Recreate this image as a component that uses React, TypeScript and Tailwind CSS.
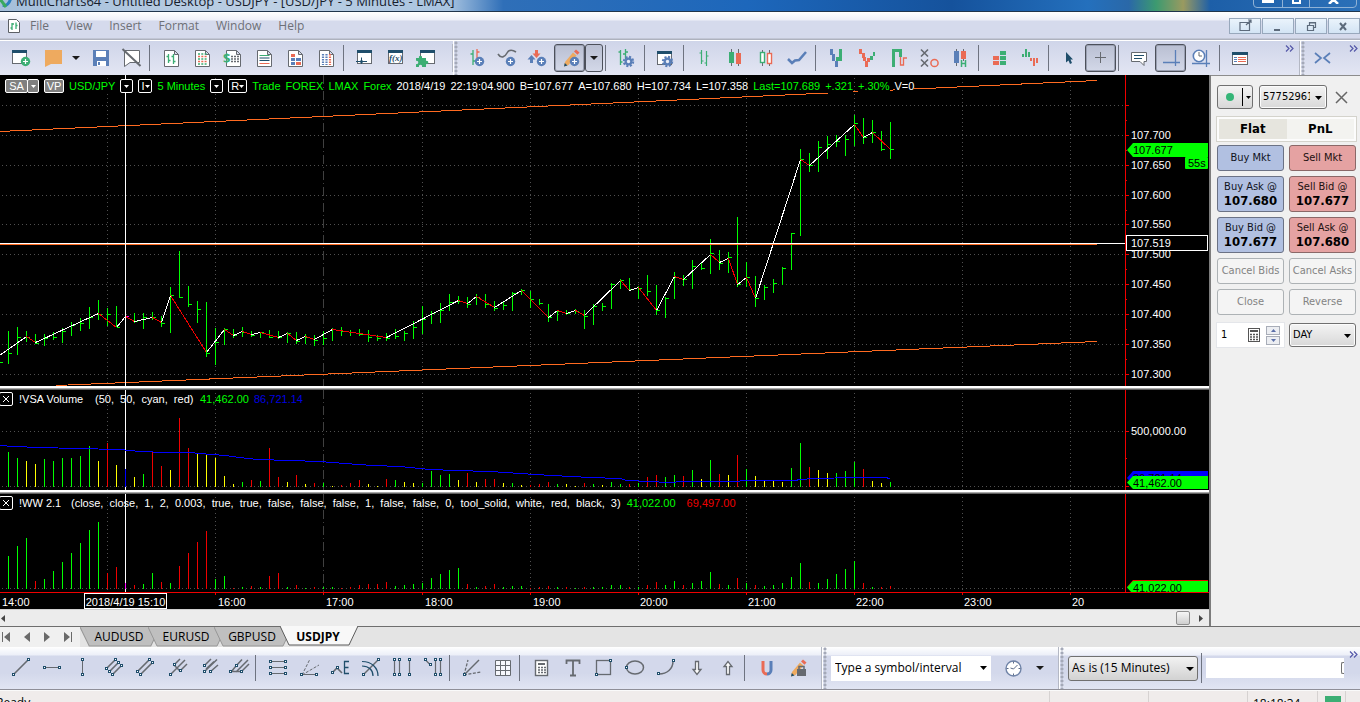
import React from "react";

const GRAY = "#666a70";
const BLUE = "#5a7fb8";
const GREEN = "#3cae74";
const RED = "#ea6b55";
const TEAL = "#1f4e6b";
const ORANGE = "#eeaa5f";

/* ---------- market data ---------- */

const BAR_STEP = 9;
const FIRST_BAR = 8;
const CURSOR_BAR = 13;
const PLOT_WIDTH = 1125;

// high, low, close in plot units
const priceBars = `256,289,278 252,280,262 256,267,262 259,269,268 259,271,263 257,265,262 253,268,256 247,261,250 243,256,248 232,254,242
225,245,239 233,251,239 231,252,252 235,261,241 238,248,246 238,254,242 237,245,242 241,252,248 212,258,220 176,223,222
211,232,229 226,248,234 227,282,278 253,290,267 253,270,254 254,263,260 252,262,257 256,262,260 257,263,257 255,263,262
256,264,262 257,268,258 257,269,266 259,269,262 260,271,265 256,270,263 253,266,254 252,261,256 255,261,257 254,261,259
255,267,262 260,266,263 258,266,263 254,264,261 256,266,258 246,264,252 231,259,244 236,249,238 228,248,235 219,236,227
221,229,226 222,233,229 219,230,222 219,233,229 226,236,233 226,235,230 217,236,218 214,220,215 216,233,224 224,230,228
229,247,242 235,246,236 235,240,238 234,239,236 235,254,241 229,250,231 228,236,231 208,234,209 204,214,205 203,216,214
211,224,213 200,221,216 210,240,235 222,243,223 197,224,202 200,211,204 185,214,191 188,195,193 164,199,178 175,195,188
177,198,182 142,212,209 187,212,202 201,232,223 210,225,212 204,218,208 192,210,193 158,195,158 74,161,84 78,97,90
66,97,72 61,84,69 60,72,66 60,81,64 40,71,48 43,69,62 45,68,57 56,76,74 47,84,74`
  .split(/\s+/)
  .map((bar) => bar.split(",").map(Number));

const swings: [number, number][] = [
  [-1, 280], [26, 261], [35, 267], [98, 238], [116, 252], [125, 241], [134, 246], [152, 242], [161, 247], [170, 220],
  [206, 277], [224, 254], [233, 260], [242, 256], [251, 259], [260, 257], [278, 262], [287, 258], [296, 265], [305, 261],
  [314, 264], [332, 254], [386, 262], [458, 225], [467, 228], [476, 221], [494, 232], [521, 215], [548, 242], [557, 235],
  [566, 238], [575, 235], [584, 240], [620, 205], [629, 215], [638, 212], [656, 235], [674, 201], [683, 204], [710, 179],
  [719, 187], [728, 183], [737, 209], [746, 202], [755, 223], [800, 84], [809, 90], [854, 49], [863, 62], [872, 57], [890, 74],
];

const volumeBars = `g35 g29 y26 y23 g28 g26 g29 g29 g31 g41 y26 r44 y22 b18 y10 g13 r35 r21 y17 r69 r39 y34 y33 y29 y11 y3 g5 r7 g6 r39
r10 y5 r12 y3 r4 g4 y1 r2 r4 r7 y3 y1 r8 g7 y5 y4 g4 g16 g12 g13 y7 r14 y5 r8 r8 y4 g4 y2 r2 r3 r5 g3 y3 y1 r4 g3 y2 g5 g3 r3
g4 r10 r12 g10 g12 r11 g17 y8 g27 r13 y12 r32 g18 y11 y7 y6 y5 g19 g44 r20 y17 y14 g14 g16 g25 r18 y6 y4 g5`.split(/\s+/);

const waveBars = `g33 g43 g51 r8 g10 g18 g27 g36 g46 g59 g67 r16 r22 m6 r4 g5 g16 r7 g6 r23 r36 r47 r58 g10 g13 r1 g2 r3 g2 r13
r16 g2 r4 g1 r2 g2 g2 r1 r2 r4 r5 r5 r7 g3 g4 g5 g6 g11 g15 g19 g21 r5 g2 r3 r5 g2 g3 g3 r1 r2 r3 g2 r2 g1 r2 g2 g2 g4
g4 r2 g2 r4 r7 g4 g8 r4 g6 g8 g17 r5 g4 r11 g6 r4 g3 g4 g6 g12 g26 r7 g6 g10 g15 g20 g28 r6 g2 r2 r3`.split(/\s+/);

const volumeAverage =
  "0,55 13,56 40,57 76,58 120,59 140,61 165,62 190,62 200,63 225,65 240,67 257,69 290,70 320,71 345,73 373,75 400,76 430,79 455,80 490,81 520,83 552,85 590,87 620,88 627,90 650,91 668,92 685,91 735,91 745,90 795,90 800,89 815,88 855,87 885,87 890,88";

const barColors: Record<string, string> = { g: "#00ff00", r: "#f00000", y: "#ffff00", b: "#0000ff", m: "#ff00ff" };

const hourLines = [107, 215, 422, 530, 638, 746, 854, 962, 1070];

const timeLabels = [
  { x: 2, text: "14:00" }, { x: 218, text: "16:00" }, { x: 326, text: "17:00" }, { x: 425, text: "18:00" }, { x: 533, text: "19:00" },
  { x: 640, text: "20:00" }, { x: 748, text: "21:00" }, { x: 856, text: "22:00" }, { x: 964, text: "23:00" }, { x: 1072, text: "20" },
];

const priceLabels = [
  { y: 60, text: "107.700" }, { y: 90, text: "107.650" }, { y: 120, text: "107.600" }, { y: 149, text: "107.550" }, { y: 179, text: "107.500" },
  { y: 209, text: "107.450" }, { y: 239, text: "107.400" }, { y: 269, text: "107.350" }, { y: 299, text: "107.300" },
];

/* ---------- chart pieces ---------- */

function Grid({ height, rows }: { height: number; rows: number[] }) {
  return (
    <g stroke="#505050" fill="none">
      {rows.map((y) => (
        <path key={y} d={`M2 ${y}.5H1125`} strokeDasharray="1 3" />
      ))}
      {hourLines.map((x) => (
        <path key={x} d={`M${x}.5 3V${height}`} strokeDasharray="1 3" />
      ))}
      <path d={`M323.5 0V${height}`} stroke="#404040" strokeDasharray="9 3 1 3" />
    </g>
  );
}

function Plot({ height, className, children }: { height: number; className: string; children: React.ReactNode }) {
  return (
    <svg className={`block min-w-0 flex-1 ${className}`} viewBox={`0 0 ${PLOT_WIDTH} ${height}`} preserveAspectRatio="none" shapeRendering="crispEdges">
      {children}
    </svg>
  );
}

function Histogram({ bars, base }: { bars: string[]; base: number }) {
  return (
    <>
      {bars.map((bar, i) => {
        const h = Number(bar.slice(1));
        return <rect key={i} x={FIRST_BAR + i * BAR_STEP} y={base - h} width="1" height={h} fill={barColors[bar[0]]} />;
      })}
    </>
  );
}

function Splitter() {
  return <div className="h-1 shrink-0 border-b border-[#606060] bg-gradient-to-b from-white from-60% to-[#a8a8a8] to-80%" />;
}

function HeaderBox({ children, gray, className = "" }: { children?: React.ReactNode; gray?: boolean; className?: string }) {
  return (
    <button className={`flex h-[14px] items-center justify-center rounded-[2px] border border-white ${gray ? "bg-[#808080]" : "bg-black"} ${className}`}>
      {children}
    </button>
  );
}

function Caret({ className = "text-white", size = 5 }: { className?: string; size?: number }) {
  return (
    <svg className={className} width={size} height={size === 5 ? 3 : 4} viewBox="0 0 8 4" preserveAspectRatio="none">
      <path d="M0 0H8L4 4z" fill="currentColor" />
    </svg>
  );
}

function PaneHeader({ children }: { children: React.ReactNode }) {
  return (
    <div className="absolute top-[2px] left-0 flex items-center whitespace-pre text-[11px] leading-[14px] text-white">
      <button aria-label="Close study" className="-ml-px flex size-[14px] items-center justify-center rounded-[2px] border border-white bg-black">
        <svg width="8" height="8" viewBox="0 0 8 8" stroke="#fff"><path d="M1 1L7 7M7 1L1 7" /></svg>
      </button>
      {children}
    </div>
  );
}

function PriceTag({ y, color, label, height = 14 }: { y: number; color: string; label: string; height?: number }) {
  return (
    <g>
      <path d={`M2 ${y + height / 2}L8 ${y}H83V${y + height}H8z`} fill={color} />
      <text x="8" y={y + 11} fill="#000">{label}</text>
    </g>
  );
}

function PricePane() {
  const rows = [30, 60, 90, 120, 149, 179, 209, 239, 269, 299];
  return (
    <div className="relative flex h-[311px] shrink-0">
      <Plot height={311} className="h-[311px]">
        <Grid height={311} rows={rows} />
        <path d="M0 56.5L1097 5.5M56 310.5L1097 266.5" stroke="#ff6a20" fill="none" />
        {priceBars.map(([high, low, close], i) => {
          const x = FIRST_BAR + i * BAR_STEP;
          return (
            <path key={i} d={`M${x} ${high}h1V${close}h3v1h-3V${low}h-1z`} fill={i === CURSOR_BAR ? "#ff00ff" : "#00ff00"} />
          );
        })}
        <rect x="0" y="287" width="3" height="1" fill="#00ff00" />
        {swings.slice(1).map(([x, y], i) => (
          <path key={i} d={`M${swings[i][0] + 0.5} ${swings[i][1] + 0.5}L${x + 0.5} ${y + 0.5}`} stroke={i % 2 === 0 ? "#fff" : "#f00000"} />
        ))}
        <rect x="0" y="168" width="1125" height="1" fill="#fff" />
        <rect x="0" y="169" width="1097" height="1" fill="#ff6a20" />
        <rect x="125" y="0" width="1" height="311" fill="#fff" />
      </Plot>
      <svg className="block w-[84px] shrink-0" height="311" fontSize="11">
        <g fill="#f00000" shapeRendering="crispEdges">
          <rect x="0" y="0" width="1" height="311" />
          {rows.map((y) => <rect key={y} x="1" y={y} width="3" height="1" />)}
          {rows.map((y) => <rect key={y} x="1" y={y + 15} width="1" height="1" />)}
        </g>
        {priceLabels.map((p) => <text key={p.text} x="6" y={p.y + 4} fill="#fff">{p.text}</text>)}
        <PriceTag y={68} color="#00ff00" label="107.677" />
        <rect x="60" y="82" width="23" height="12" rx="1" fill="#00ff00" />
        <text x="63" y="92" fill="#000">55s</text>
        <rect x="1.5" y="160.5" width="81" height="15" fill="#000" stroke="#fff" />
        <text x="6" y="172" fill="#fff">107.519</text>
      </svg>
      <div className="absolute top-[4px] left-[5px] flex items-center gap-[5px] whitespace-nowrap text-[11px] leading-[14px] text-[#00ff00]">
        <span className="flex text-white">
          <HeaderBox gray className="w-[23px]">SA</HeaderBox>
          <HeaderBox gray className="-ml-px w-[12px]"><Caret /></HeaderBox>
        </span>
        <HeaderBox gray className="w-5 text-white">VP</HeaderBox>
        <span className="bg-black">USD/JPY</span>
        <HeaderBox className="w-[13px]"><Caret /></HeaderBox>
        <HeaderBox className="w-[14px] text-white">I<Caret /></HeaderBox>
        <span className="bg-black">5 Minutes</span>
        <HeaderBox className="w-[13px]"><Caret /></HeaderBox>
        <HeaderBox className="w-[19px] text-white">R<Caret /></HeaderBox>
        <span className="bg-black">Trade</span>
        <span className="bg-black">FOREX</span>
        <span className="bg-black">LMAX</span>
        <span className="bg-black">Forex</span>
        <span className="bg-black text-white">2018/4/19</span>
        <span className="bg-black text-white">22:19:04.900</span>
        <span className="bg-black text-white">B=107.677</span>
        <span className="bg-black text-white">A=107.680</span>
        <span className="bg-black text-white">H=107.734</span>
        <span className="bg-black text-white">L=107.358</span>
        <span className="bg-black">Last=107.689</span>
        <span className="bg-black">+.321</span>
        <span className="bg-black">+.30%</span>
        <span className="bg-black text-white">V=0</span>
      </div>
    </div>
  );
}

function VolumePane() {
  return (
    <div className="relative flex h-[100px] shrink-0">
      <Plot height={100} className="h-[100px]">
        <Grid height={100} rows={[41, 96]} />
        <rect x="125" y="0" width="1" height="100" fill="#fff" />
        <Histogram bars={volumeBars} base={97} />
        <polyline points={volumeAverage} stroke="#0000ff" fill="none" transform="translate(0 .5)" />
      </Plot>
      <svg className="block w-[84px] shrink-0" height="100" fontSize="11">
        <path d="M.5 0V100M1 41.5H4M1 68.5H2M1 96.5H4" stroke="#f00000" shapeRendering="crispEdges" />
        <text x="6" y="45" fill="#fff">500,000.00</text>
        <PriceTag y={81} color="#0000ff" label="86,721.14" />
        <PriceTag y={86} color="#00ff00" label="41,462.00" height={13} />
      </svg>
      <PaneHeader>
        <span className="ml-[6px] w-[76px] bg-black">!VSA Volume</span>
        <span className="w-[105px]">(50,  50,  cyan,  red)</span>
        <span className="w-[54px] text-[#00ff00]">41,462.00</span>
        <span className="text-[#0000e0]">86,721.14</span>
      </PaneHeader>
    </div>
  );
}

function WavePane() {
  return (
    <div className="relative flex h-[98px] shrink-0">
      <Plot height={98} className="h-[98px]">
        <Grid height={98} rows={[94]} />
        <rect x="125" y="0" width="1" height="98" fill="#fff" />
        <Histogram bars={waveBars} base={95} />
      </Plot>
      <svg className="block w-[84px] shrink-0" height="98" fontSize="11">
        <path d="M.5 0V98" stroke="#f00000" shapeRendering="crispEdges" />
        <PriceTag y={86} color="#f00000" label="" />
        <PriceTag y={87} color="#00ff00" label="41,022.00" height={13} />
      </svg>
      <PaneHeader>
        <span className="ml-[6px] w-[52px] bg-black">!WW 2.1</span>
        <span className="mr-[6px]">(close,  close,  1,  2,  0.003,  true,  true,  false,  false,  false,  1,  false,  false,  0,  tool_solid,  white,  red,  black,  3)</span>
        <span className="mr-[11px] text-[#00ff00]">41,022.00</span>
        <span className="text-[#f00000]">69,497.00</span>
      </PaneHeader>
    </div>
  );
}

function TimeAxis() {
  return (
    <div className="flex h-[17px] shrink-0 border-t border-[#f00000] bg-black">
      <div className="relative min-w-0 flex-1 text-[11px] leading-[18px] text-white">
        {timeLabels.map((t) => (
          <span key={t.x} className="absolute top-0" style={{ left: `${(t.x / PLOT_WIDTH) * 100}%` }}>{t.text}</span>
        ))}
        {[215, 323, 422, 530, 638, 746, 854, 962, 1070].map((x) => (
          <i key={x} className="absolute top-0 h-[2px] w-px bg-[#f00000]" style={{ left: `${(x / PLOT_WIDTH) * 100}%` }} />
        ))}
        <span className="absolute top-0 left-[84px] h-4 w-[83px] border border-white bg-black text-center leading-4 whitespace-nowrap">2018/4/19 15:10</span>
      </div>
      <div className="w-[84px] shrink-0" />
    </div>
  );
}

/* ---------- toolbar icons ---------- */

function Tool({ label, children, pressed }: { label: string; children: React.ReactNode; pressed?: boolean }) {
  return (
    <button
      aria-label={label}
      className={`flex h-[28px] w-[31px] shrink-0 items-center justify-center overflow-hidden ${pressed ? "rounded-[3px] border border-[#4c505a] bg-gradient-to-b from-[#b9bfd2] to-[#d3d8e8] shadow-[inset_0_0_0_1px_#9aa0b2]" : ""}`}
    >
      <svg className="block shrink-0" width="31" height="34" viewBox="0 0 31 34" fill="none">{children}</svg>
    </button>
  );
}

function Sep() {
  return <i className="flex h-[26px] w-2 shrink-0 pl-[2px]"><i className="w-px bg-[#6e7380]" /></i>;
}

function Grip() {
  return <i className="h-full w-[5px] shrink-0 border-l border-white bg-[radial-gradient(circle,#a4a9b8_1px,transparent_2px)] bg-[length:4px_4px]" />;
}

function DropCaret({ label }: { label: string }) {
  return (
    <button aria-label={label} className="flex h-[28px] w-[18px] shrink-0 items-center justify-center">
      <Caret className="text-[#1a1a1a]" size={8} />
    </button>
  );
}

function Chevrons({ className = "" }: { className?: string }) {
  return (
    <button aria-label="More tools" className={`flex w-3 shrink-0 justify-center ${className}`}>
      <svg width="9" height="7" viewBox="0 0 9 7" fill="none" stroke="#5458a8" strokeWidth="1.2"><path d="M1 .5L4 3.5L1 6.5M5 .5L8 3.5L5 6.5" /></svg>
    </button>
  );
}

const Doc = () => <path d="M9.5 9.5H19.5L23.5 13.5V25.5H9.5zM19.5 9.5V13.5H23.5" fill="#fff" stroke={GRAY} />;
const Win = ({ x = 7, y = 9 }: { x?: number; y?: number }) => (
  <>
    <rect x={x + 0.5} y={y + 0.5} width="14" height="13" fill="#fff" stroke={GRAY} />
    <rect x={x} y={y} width="15" height="3" fill={TEAL} />
  </>
);
const Plus = ({ x = 18.5, y = 20.5, color = BLUE }: { x?: number; y?: number; color?: string }) => (
  <>
    <circle cx={x} cy={y} r="4.7" fill={color} />
    <path d={`M${x - 2.5} ${y}h5M${x} ${y - 2.5}v5`} stroke="#fff" strokeWidth="1.2" />
  </>
);
const Gear = ({ x = 17.5, y = 20.5 }: { x?: number; y?: number }) => (
  <>
    <circle cx={x} cy={y} r="4.5" stroke={BLUE} strokeWidth="2.4" strokeDasharray="2 1.53" />
    <circle cx={x} cy={y} r="2.8" stroke={BLUE} strokeWidth="2.2" fill="#e8ecf6" />
  </>
);
const Nodes = ({ at }: { at: [number, number][] }) => (
  <>
    {at.map(([x, y]) => (
      <rect key={`${x}-${y}`} x={x - 1.5} y={y - 1.5} width="2" height="2" fill="#fff" stroke={TEAL} />
    ))}
  </>
);
const Pencil = () => (
  <>
    <path d="M11 21L19 11.5L22.5 14.5L14.5 24L10 25.5z" fill={ORANGE} />
    <path d="M10 25.5L10.8 22L13.5 24.4z" fill={TEAL} />
    <path d="M20 10.5L22 8.5L25.5 11.5L23.5 13.7z" fill={RED} />
  </>
);

function TopTools() {
  return (
    <div className="flex h-[34px] shrink-0 items-center overflow-hidden bg-gradient-to-b from-[#cfd5e9] to-[#e3e6f3]">
      <div className="flex w-[453px] shrink-0 items-center border-r border-[#b4b8c4] pl-[5px]">
        <Tool label="New window"><Win /><Plus x={20.5} color={GREEN} /></Tool>
        <Tool label="Open"><path d="M9 9H26V23H15L9 26z" fill={ORANGE} /></Tool>
        <DropCaret label="Open options" />
        <Tool label="Save">
          <rect x="8" y="9" width="16" height="16" fill={BLUE} /><rect x="11" y="10" width="10" height="6" fill="#fff" /><rect x="12" y="20" width="9" height="5" fill="#fff" /><rect x="13" y="21" width="2" height="3" fill={BLUE} />
        </Tool>
        <Tool label="Hide drawings"><path d="M8.5 9.5H23.5V21.5H14L8.5 25.5z" fill="#fff" stroke={GRAY} /><path d="M6.5 8L24.5 25" stroke={GRAY} strokeWidth="2" /></Tool>
        <Sep />
        <Tool label="Chart window"><Doc /><path d="M13.5 13V22M13.5 15.5h-2M18.5 13V23M18.5 20.5h2M13.5 19.5h2M16.5 15.5h2" stroke={GREEN} strokeWidth="1.3" /></Tool>
        <Tool label="Scanner"><Doc />{[13, 15.5, 18, 20.5, 23].map((y, i) => <path key={y} d={`M12 ${y}H21`} stroke={i % 2 ? RED : GREEN} strokeWidth="1.4" strokeDasharray="2 1.3" />)}</Tool>
        <Tool label="Portfolio"><Doc /><path d="M14 15.5H22M14 18H22M14 20.5H22" stroke={GRAY} strokeDasharray="2 1" strokeWidth="1.3" /><text x="6" y="22" fontSize="13" fontWeight="bold" fill={GREEN}>$</text></Tool>
        <Tool label="Order tracker"><Doc /><path d="M11.5 14.5H21.5" stroke={GREEN} /><path d="M11.5 17H21.5M11.5 19.5H21.5" stroke={TEAL} /><path d="M11.5 22.5H21.5" stroke={RED} /></Tool>
        <Tool label="Market depth"><Doc /><rect x="12" y="13" width="4" height="3" fill={RED} /><path d="M12 17h4v3h-4zM12 21h4v3h-4zM17 17h5v3h-5z" fill={BLUE} /><rect x="17" y="21" width="5" height="3" fill={RED} /></Tool>
        <Tool label="Time and sales"><Doc /><path d="M13 13V24M16.5 13V24" stroke={BLUE} strokeWidth="2.2" strokeDasharray="1.5 1" /><path d="M20 13V24" stroke={RED} strokeWidth="2.2" strokeDasharray="1.5 1" /></Tool>
        <Sep />
        <Tool label="Trading panel"><Win x={8} /><path d="M7 20.5H18M12.5 16.5V23" stroke={TEAL} /><circle cx="12.5" cy="20.5" r="1.5" fill={TEAL} /></Tool>
        <Tool label="Formula editor"><Win x={8} /><text x="9" y="20" fontSize="9" fontStyle="italic" fontWeight="bold" fill={TEAL} fontFamily="Liberation Serif, serif">f(x)</text></Tool>
        <Tool label="Add-ons"><Win x={9} /><path d="M5 17h3c-1-3 4-3 3 0h4v3c3-1 3 4 0 3v3h-4c1-3-4-3-3 0H5v-3c3 1 3-4 0-3z" fill={GREEN} /></Tool>
      </div>
      <Grip />
      <div className="flex min-w-0 flex-1 items-center pl-[3px]">
        <Tool label="Insert symbol"><path d="M12 9V24M9.5 13h2.5M12 20h2.5" stroke={GREEN} strokeWidth="1.3" /><path d="M16 8V17M16 11h2.5" stroke={RED} strokeWidth="1.3" /><Plus /></Tool>
        <Tool label="Insert study"><path d="M6 13C9 18 13 16 15 12C17 8 21 9 24 11" stroke={GRAY} strokeWidth="1.6" /><Plus /></Tool>
        <Tool label="Insert signal"><path d="M12 9h3v3.5h2.5L13.5 17L9.5 12.5H12z" fill={RED} /><path d="M8.5 14L12.5 18.5H10V22H7V18.5H4.5z" fill={BLUE} /><Plus /></Tool>
        <Tool label="Insert drawing" pressed><Pencil /><Plus x={20.5} /></Tool>
        <button aria-label="Drawing options" className="flex h-[28px] w-[18px] shrink-0 items-center justify-center rounded-[3px] border border-[#4c505a] bg-gradient-to-b from-[#b9bfd2] to-[#d3d8e8]"><Caret className="text-[#1a1a1a]" size={8} /></button>
        <Sep />
        <Tool label="Format symbol"><path d="M9.5 9V24M7.5 11h2M9.5 21h2M14.5 8V18M12 13h2.5M14.5 11h2.5" stroke={GREEN} strokeWidth="1.3" /><Gear /></Tool>
        <Sep />
        <Tool label="Format window"><Win x={7} y={10} /><Gear /></Tool>
        <Sep />
        <Tool label="Bar chart"><path d="M12.5 9V23M10.5 12h2M12.5 20h2M17.5 10V25M15.5 22h2M17.5 15h2" stroke={GREEN} strokeWidth="1.2" /></Tool>
        <Tool label="Candlestick"><path d="M11.5 8V25M18.5 8V25" stroke={GRAY} /><rect x="9" y="11" width="5" height="11" fill={GREEN} /><rect x="16" y="12" width="5" height="11" fill={RED} /></Tool>
        <Tool label="Hollow candlestick"><path d="M11.5 9V25M18.5 9V25" stroke={GRAY} /><rect x="9.5" y="11.5" width="4" height="10" fill="#fff" stroke={GREEN} strokeWidth="1.4" /><rect x="16.5" y="12.5" width="4" height="10" fill="#fff" stroke={RED} strokeWidth="1.4" /></Tool>
        <Tool label="Line on close"><path d="M6 18L10 22L13 19.5L17 19L24 11" stroke={BLUE} strokeWidth="2.5" /></Tool>
        <Sep />
        <Tool label="Renko"><path d="M9 8h3v6H9zM11 13h3v7h-3zM14 20h3v6h-3z" fill={BLUE} /><path d="M18 8h3v12h-3zM15 16h3v4h-3z" fill={GREEN} /></Tool>
        <Tool label="Kagi"><path d="M7 8h3v5H7zM10 12h3v5h-3zM13 20h3v6h-3zM11 16h3v4h-3zM15 17h3v4h-3z" fill={RED} /><path d="M18 15h3v-4h2v4h-2v4h-3z" fill={GREEN} /></Tool>
        <Tool label="Line break"><path d="M10.5 26V9.5H17.5V16" stroke={GREEN} strokeWidth="3" /><path d="M17.5 16V24H20.5V17H24" stroke={RED} strokeWidth="1.3" /></Tool>
        <Tool label="Point and figure"><path d="M7 8.5L14 15.5M14 8.5L7 15.5M7 18.5L14 25.5M14 18.5L7 25.5" stroke={GRAY} strokeWidth="1.6" /><circle cx="20.5" cy="22" r="3.6" stroke={RED} strokeWidth="1.5" /></Tool>
        <Tool label="Heikin Ashi"><path d="M11.5 8V25M18.5 8V20" stroke={GRAY} /><rect x="9" y="10" width="5" height="12" fill={BLUE} /><rect x="16" y="10" width="5" height="8" fill={RED} /><path d="M16.5 19V26M20.5 19V26M16.5 22.5H20.5" stroke={GREEN} strokeWidth="1.5" /></Tool>
        <Sep />
        <Tool label="Volume profile"><path d="M16 10h6v4h-6zM16 15h6v4h-6zM16 20h6v4h-6z" fill={GREEN} /><path d="M9 15h6v4H9zM9 20h6v4H9z" fill={RED} /></Tool>
        <Tool label="Volume delta"><path d="M7 13h2v3H7zM10 8h2v8h-2zM13 11h2v5h-2z" fill={GREEN} /><path d="M15 17h2v3h-2zM18 17h2v8h-2zM21 17h2v5h-2z" fill={RED} /></Tool>
        <Sep />
        <Tool label="Pointer"><path d="M12 11V21.5L14.5 19.5L16 23L18 22L16.5 18.5H19z" fill={TEAL} /></Tool>
        <Tool label="Cross pointer" pressed><path d="M10 16.5H21M15.5 11V22" stroke={GRAY} /></Tool>
        <Sep />
        <Tool label="Data tip"><path d="M7.5 11.5H22.5V20.5H20V24.5L16 20.5H7.5z" fill="#fff" stroke={GRAY} /><path d="M10 14.5H20M10 17.5H18" stroke={TEAL} /></Tool>
        <Tool label="Track cursor" pressed><path d="M8 21.5H25M20.5 9V25" stroke={BLUE} strokeWidth="1.3" /></Tool>
        <Tool label="Time tracking"><circle cx="13" cy="15" r="5.7" fill="#fff" stroke={BLUE} strokeWidth="1.6" /><path d="M13 11V15H16" stroke={GRAY} /><path d="M6 22.5H24M20.5 9V26" stroke={BLUE} strokeWidth="1.3" /></Tool>
        <Sep />
        <Tool label="Quote list"><rect x="7.5" y="11.5" width="15" height="12" fill="#fff" stroke={GRAY} /><rect x="7" y="11" width="16" height="3" fill={TEAL} /><path d="M9 16.5h3M9 18.5h3M9 20.5h3" stroke={BLUE} /><path d="M13 16.5h8M13 18.5h8M13 20.5h8" stroke={RED} /></Tool>
        <Chevrons className="mb-5 ml-auto" />
        <i className="ml-[4px] h-[34px] w-px bg-[#b4b8c4]" />
      </div>
      <Grip />
      <Tool label="Compress bars"><path d="M10 12L16 17L10 22M25 12L19 17L25 22" stroke={BLUE} strokeWidth="1.7" /></Tool>
      <Chevrons className="mr-px mb-5 ml-[11px]" />
    </div>
  );
}

function DrawingTools() {
  return (
    <div className="flex min-w-0 flex-1 items-center pl-[5px]">
      <Tool label="Trend line"><path d="M8 24L22.5 9.5" stroke={GRAY} strokeWidth="1.6" /><Nodes at={[[9, 24], [24, 9]]} /></Tool>
      <Tool label="Horizontal line"><path d="M9 16.5H23" stroke={GRAY} /><Nodes at={[[9, 17], [24, 17]]} /></Tool>
      <Tool label="Vertical line"><path d="M15.5 10V24" stroke={GRAY} /><Nodes at={[[16, 9], [16, 24]]} /></Tool>
      <Tool label="Equidistant channel"><path d="M8 18L17 9M11 21L20 12M14 24L23 15" stroke={GRAY} strokeWidth="1.6" /><Nodes at={[[18, 9], [24, 15], [9, 18], [15, 24], [12, 21], [21, 12]]} /></Tool>
      <Tool label="Regression channel"><path d="M8 21L20 9M11 24L23 12" stroke={GRAY} strokeWidth="1.6" /><Nodes at={[[21, 9], [24, 12], [9, 21], [12, 24]]} /></Tool>
      <Tool label="Pitchfork"><path d="M10 24L25 9M14 14L20 8M20 20L27 13M14 14L20 20" stroke={GRAY} strokeWidth="1.5" /><Nodes at={[[11, 24], [15, 14], [21, 20]]} /></Tool>
      <Tool label="Schiff fork"><path d="M13 15L20 8M13 21L26 8.5M19 21L27 14M15 18L23 10.5" stroke={GRAY} strokeWidth="1.5" /><Nodes at={[[14, 15], [14, 21], [20, 21]]} /></Tool>
      <Tool label="Modified fork"><path d="M14 15L20 8.5M9 21L14 15M9 20.5H20M14 21L26 9M19 21L27 13" stroke={GRAY} strokeWidth="1.5" /><Nodes at={[[9, 21], [20, 21], [15, 15]]} /></Tool>
      <Sep />
      <Tool label="Retracement lines"><path d="M9 10.5H24M9 16.5H24M9 22.5H24" stroke={GRAY} /><Nodes at={[[10, 11], [25, 11], [10, 17], [25, 17], [10, 23], [25, 23]]} /></Tool>
      <Tool label="Speed fan"><path d="M10 24L18 8M10 24L27 14" stroke={GRAY} strokeDasharray="3 1.5" /><path d="M10 23.5H24" stroke={GRAY} /><Nodes at={[[10, 24], [25, 24]]} /></Tool>
      <Tool label="Elliott wave"><path d="M9 22L14 17L19 22" stroke={GRAY} strokeWidth="1.6" /><path d="M26 10.5H21.5V22.5H26M21.5 16.5H25.5" stroke={TEAL} strokeWidth="1.3" /><Nodes at={[[10, 22], [15, 17]]} /></Tool>
      <Tool label="Speed arcs"><path d="M9 24L24 9" stroke={GRAY} strokeWidth="1.5" /><path d="M8 10.5C18 10.5 24 17 24 25M8 15C15 15 19 19 19 25" stroke={TEAL} strokeWidth="1.2" /><Nodes at={[[10, 24], [25, 9]]} /></Tool>
      <Tool label="Time zones"><path d="M9.5 9V24M14.5 9V24M24.5 9V24" stroke={GRAY} strokeWidth="1.2" /><Nodes at={[[10, 9], [10, 24], [15, 9], [15, 24], [25, 9], [25, 24]]} /></Tool>
      <Tool label="Time extension"><path d="M9.5 9L14.5 14M19.5 9V24M24.5 9V24" stroke={GRAY} strokeWidth="1.2" /><Nodes at={[[10, 9], [15, 14], [20, 9], [20, 24], [25, 9], [25, 24]]} /></Tool>
      <Sep />
      <Tool label="Gann fan"><path d="M9 24L24 9" stroke={GRAY} strokeWidth="1.5" /><path d="M9 24L13 9M9 24L26 21" stroke={GRAY} strokeDasharray="3 1.5" strokeWidth="1.3" /><Nodes at={[[10, 24]]} /></Tool>
      <Tool label="Gann grid"><path d="M9.5 9.5H24.5V24.5H9.5zM14.5 9.5V24.5M19.5 9.5V24.5M9.5 14.5H24.5M9.5 19.5H24.5" fill="#f6f7fc" stroke={GRAY} /></Tool>
      <Sep />
      <Tool label="Risk calculator"><rect x="10.5" y="9.5" width="12" height="15" fill="#fff" stroke={GRAY} strokeWidth="1.4" /><rect x="13" y="12" width="7" height="2" fill={GRAY} /><path d="M13 16.5h8M13 19h8M13 21.5h8" stroke={GRAY} strokeDasharray="2 1" strokeWidth="1.5" /></Tool>
      <Tool label="Text"><path d="M10.5 13V9.5H23.5V13M17 9.5V24.5M14 24.5H20" stroke={GRAY} strokeWidth="1.8" /></Tool>
      <Tool label="Rectangle"><rect x="9.5" y="9.5" width="14" height="14" stroke={GRAY} strokeWidth="1.3" /><Nodes at={[[10, 24], [24, 10]]} /></Tool>
      <Tool label="Ellipse"><ellipse cx="17" cy="16.5" rx="8.5" ry="6.5" stroke={GRAY} strokeWidth="1.5" /><Nodes at={[[9, 17]]} /></Tool>
      <Tool label="Arc"><path d="M10 23C18 23 24 18 24 10" stroke={GRAY} strokeWidth="1.5" /><Nodes at={[[10, 23], [25, 10]]} /></Tool>
      <Tool label="Arrow down"><path d="M15.5 10.5H18.5V18.5H21L17 23.5L13 18.5H15.5z" fill="#fff" stroke={GRAY} strokeWidth="1.3" /></Tool>
      <Tool label="Arrow up"><path d="M15.5 23.5H18.5V15.5H21L17 10.5L13 15.5H15.5z" fill="#fff" stroke={GRAY} strokeWidth="1.3" /></Tool>
      <Sep />
      <Tool label="Snap to price"><path d="M13 10V19a4 4 0 0 0 4 4" stroke={RED} strokeWidth="3" /><path d="M21 10V19a4 4 0 0 1-4 4" stroke={BLUE} strokeWidth="3" /></Tool>
      <Tool label="Lock drawings"><Pencil /><rect x="16" y="18" width="9" height="7" fill={GRAY} /><path d="M18 18v-2.5h5V18" stroke={GRAY} strokeWidth="1.5" /></Tool>
      <i className="ml-auto h-[43px] w-px bg-[#b4b8c4]" />
    </div>
  );
}

/* ---------- page sections ---------- */

function TitleBar() {
  return (
    <header className="flex h-3 shrink-0 items-end justify-between overflow-hidden border-b border-[#20354c] bg-[linear-gradient(90deg,#a5bfdb_0%,#bdd0e4_20%,#a9c4e0_33%,#2f6fb8_37%,#1d67bb_55%,#15529c_70%,#2470bd_80%,#2a68a8_83%,#3c9a70_85%,#9a9a60_87%,#1d5fa8_89%,#2b70b8_100%)]">
      <div className="flex h-5 items-center">
        <svg width="16" height="16" viewBox="0 0 16 16" fill="none"><path d="M3 12C6 14 10 10 11 4" stroke="#2b7fc0" strokeWidth="3" /><path d="M0 6L6 14" stroke="#39a95e" strokeWidth="3" /></svg>
        <h1 className="text-[13px] leading-5 whitespace-nowrap text-[#16202c]">MultiCharts64 - Untitled Desktop - USDJPY - [USD/JPY - 5 Minutes - LMAX]</h1>
      </div>
      <div className="mr-[3px] mb-[3px] flex h-4 items-end overflow-hidden rounded-b-[4px] border border-[#8fb2d6] text-white">
        <button aria-label="Minimize" className="flex h-4 w-[29px] items-center justify-center border-r border-[#8fb2d6]"><i className="mt-1 h-[3px] w-3 bg-white" /></button>
        <button aria-label="Restore" className="flex h-4 w-[27px] items-center justify-center border-r border-[#8fb2d6]"><i className="size-[9px] border-2 border-white" /></button>
        <button aria-label="Close" className="flex h-4 w-[46px] items-center justify-center"><svg width="11" height="9" viewBox="0 0 11 9" stroke="#fff" strokeWidth="2.5"><path d="M1 0L10 9M10 0L1 9" /></svg></button>
      </div>
    </header>
  );
}

function MenuBar() {
  const boxes = [
    ["Detach", "M5 4.5H14.5V12.5H5zM11 7L16 2M13 2H16V5"],
    ["Minimize chart", "M6 11.5H12M6 12.5H12"],
    ["Restore chart", "M6.5 7.5H12.5V12.5H6.5zM8.5 7V4.5H14.5V9.5H13M8.5 5H14"],
    ["Close chart", "M6 5L12 12M12 5L6 12"],
  ];
  return (
    <nav className="flex h-[29px] shrink-0 items-center border-b border-white bg-[linear-gradient(#ffffff_0px,#eef0f8_8px,#d5daec_9px,#d5daec_26px,#aeb2be_27px)]">
      <svg className="ml-2 shrink-0" width="12" height="15" viewBox="0 0 12 15" fill="#fff" stroke="#5c6066"><path d="M.5 .5H8.5L11.5 3.5V13.5H.5z" /><path d="M4 4V11M4 9H2.5M4 5H6M8 3.5V10M8 6.5H9.5" stroke={GREEN} strokeWidth="1.3" /></svg>
      <div className="ml-[10px] flex gap-[17px] text-[12px] text-[#6e7076]">
        {["File", "View", "Insert", "Format", "Window", "Help"].map((m) => <button key={m}>{m}</button>)}
      </div>
      <div className="ml-auto flex gap-px">
        {boxes.map(([label, d]) => (
          <button key={label} aria-label={label} className="flex h-4 w-8 items-center justify-center border border-[#98a8bc] bg-gradient-to-b from-[#eaf3fb] to-[#d3e4f4]">
            <svg width="20" height="16" viewBox="0 0 20 16" fill="none" stroke="#5d6b7c" strokeWidth={label === "Close chart" ? 2 : 1.2}><path d={d} /></svg>
          </button>
        ))}
      </div>
    </nav>
  );
}

const panelSelect = "h-6 appearance-none rounded-[3px] border border-[#707070] bg-gradient-to-b from-[#f4f4f4] to-[#d8d8d8] text-[11px] text-black shadow-[inset_0_0_0_1px_#fcfcfc]";

function OrderButton({ title, price, tone }: { title: string; price?: string; tone: "buy" | "sell" | "off" }) {
  const look =
    tone === "buy"
      ? "border-[#6b7285] bg-[#b1c0e1] text-[#10131c]"
      : tone === "sell"
        ? "border-[#8a6868] bg-[#e5a2a2] text-[#1c1010]"
        : "border-[#adb2b5] bg-[#f4f4f4] text-[#838383]";
  return (
    <button className={`flex flex-col items-center justify-center rounded-[3px] border text-[11px] leading-[14px] whitespace-nowrap ${price ? "h-9" : "h-[26px]"} ${look}`}>
      {title}
      {price && <b className="text-[13px] leading-[14px] text-black">{price}</b>}
    </button>
  );
}

function TradePanel() {
  return (
    <aside className="flex w-[151px] shrink-0 flex-col border-l-2 border-[#7c7c7c] bg-[#f0f0f0] pt-[10px] pr-[4px] pl-[6px] font-['DejaVu_Sans_Condensed','Open_Sans',sans-serif] shadow-[inset_0_1px_0_#8c8c8c]">
      <div className="flex items-center">
        <button aria-label="Connection status" className="flex h-6 w-9 items-center rounded-[3px] border border-[#707070] bg-gradient-to-b from-[#f4f4f4] to-[#d8d8d8] pl-2">
          <i className="size-2 rounded-full bg-[#35b577]" />
          <i className="mr-[3px] ml-[8px] h-[18px] w-px bg-black" />
          <Caret className="text-black" />
        </button>
        <span className="relative ml-[6px] flex">
          <select aria-label="Account" className={`${panelSelect} w-[68px] pr-[16px] pl-[3px]`}><option>57752961</option></select>
          <Caret className="pointer-events-none absolute top-[11px] right-[5px] text-black" size={7} />
        </span>
        <button aria-label="Close panel" className="ml-[8px]"><svg width="13" height="13" viewBox="0 0 13 13" stroke="#666" strokeWidth="1.5"><path d="M1 1L12 12M12 1L1 12" /></svg></button>
      </div>
      <div className="mt-2 grid h-6 grid-cols-2 border-2 border-[#fcfcfc] bg-[#e6e5de] text-center text-[13px] leading-5 font-bold text-black shadow-[0_0_0_1px_#d4d3cc]">
        <span>Flat</span>
        <span className="bg-[#f3f3f0]">PnL</span>
      </div>
      <div className="mt-1 grid grid-cols-2 gap-x-[5px] gap-y-[5px]">
        <OrderButton title="Buy Mkt" tone="buy" />
        <OrderButton title="Sell Mkt" tone="sell" />
        <OrderButton title="Buy Ask @" price="107.680" tone="buy" />
        <OrderButton title="Sell Bid @" price="107.677" tone="sell" />
        <OrderButton title="Buy Bid @" price="107.677" tone="buy" />
        <OrderButton title="Sell Ask @" price="107.680" tone="sell" />
        <OrderButton title="Cancel Bids" tone="off" />
        <OrderButton title="Cancel Asks" tone="off" />
        <OrderButton title="Close" tone="off" />
        <OrderButton title="Reverse" tone="off" />
      </div>
      <div className="mt-2 grid grid-cols-2 gap-x-[5px]">
        <div className="flex h-6 items-center bg-white pr-1 shadow-[0_0_0_1px_#e4e6ea]">
          <input aria-label="Quantity" defaultValue="1" className="w-0 flex-1 bg-transparent pl-1 text-[11px] text-black outline-none" />
          <svg width="12" height="14" viewBox="0 0 12 14" fill="none"><rect x=".5" y=".5" width="11" height="13" stroke="#555" /><rect x="2" y="2" width="8" height="2" fill="#555" /><path d="M2 6.5h8M2 9h8M2 11.5h8" stroke="#555" strokeWidth="1.5" strokeDasharray="2 1" /></svg>
          <span className="ml-[6px] flex flex-col gap-px">
            <button aria-label="Increase" className="flex h-[9px] w-[14px] items-center justify-center border border-[#a8adb8] bg-[#eceef2]"><Caret className="rotate-180 text-[#5b6fa8]" /></button>
            <button aria-label="Decrease" className="flex h-[9px] w-[14px] items-center justify-center border border-[#a8adb8] bg-[#eceef2]"><Caret className="text-[#5b6fa8]" /></button>
          </span>
        </div>
        <span className="relative flex">
          <select aria-label="Time in force" className={`${panelSelect} w-full pl-[3px]`}><option>DAY</option></select>
          <Caret className="pointer-events-none absolute top-[11px] right-[5px] text-black" size={7} />
        </span>
      </div>
    </aside>
  );
}

function SheetTabs() {
  const tabs = [
    { name: "AUDUSD", active: false },
    { name: "EURUSD", active: false },
    { name: "GBPUSD", active: false },
    { name: "USDJPY", active: true },
  ];
  return (
    <div className="flex h-[21px] shrink-0 items-start border-t border-[#6e6e6e] bg-[#e4e4e4]">
      <div className="flex h-5 w-20 shrink-0 items-center gap-[14px] bg-[#f0f0f0] pl-[2px] text-[#6a6a6a]">
        <button aria-label="First tab"><svg width="8" height="10" viewBox="0 0 8 10" fill="currentColor"><path d="M0 0h1v10H0zM8 0v10L2 5z" /></svg></button>
        <button aria-label="Previous tab"><svg width="6" height="10" viewBox="0 0 6 10" fill="currentColor"><path d="M6 0v10L0 5z" /></svg></button>
        <button aria-label="Next tab"><svg width="6" height="10" viewBox="0 0 6 10" fill="currentColor"><path d="M0 0v10L6 5z" /></svg></button>
        <button aria-label="Last tab"><svg width="8" height="10" viewBox="0 0 8 10" fill="currentColor"><path d="M7 0h1v10H7zM0 0v10L6 5z" /></svg></button>
      </div>
      {tabs.map((t, i) => (
        <button key={t.name} className={`relative h-5 pr-[2px] text-[12px] leading-[18px] text-black ${i === 0 ? "w-20" : "-ml-3 w-[78px]"} ${t.active ? "-mt-px pt-px font-bold" : ""}`}>
          <svg className="absolute inset-0 size-full" viewBox="0 0 78 20" preserveAspectRatio="none">
            <path d="M0 0L9 19H69L78 0" fill={t.active ? "#f8f8f8" : "#bfbfbf"} stroke={t.active ? "#5c5c5c" : "#979797"} />
          </svg>
          <span className="relative">{t.name}</span>
        </button>
      ))}
    </div>
  );
}

function BottomTools() {
  return (
    <div className="flex h-[43px] shrink-0 items-center overflow-hidden border-b border-[#8f8f98] bg-[linear-gradient(#ffffff_0px,#eceff8_8px,#d3d8eb_9px,#d3d8eb_26px,#e1e5f3_42px)]">
      <DrawingTools />
      <Grip />
      <div className="flex w-[232px] shrink-0 items-center pl-[4px]">
        <div className="flex h-[25px] w-[160px] items-center bg-white pr-1">
          <input aria-label="Symbol or interval" defaultValue="Type a symbol/interval" className="w-0 flex-1 bg-transparent pl-1 text-[12px] text-black outline-none" />
          <button aria-label="Symbol list"><Caret className="text-black" size={7} /></button>
        </div>
        <button aria-label="Interval clock" className="ml-[14px]"><svg width="17" height="17" viewBox="0 0 17 17" fill="#fff"><circle cx="8.5" cy="8.5" r="7.5" stroke="#7084a8" strokeWidth="1.4" /><path d="M5.5 8L8.5 9L12.5 5M8.5 1.5v2M8.5 13.5v2M1.5 8.5h2M13.5 8.5h2" stroke="#5a6a88" fill="none" /></svg></button>
        <button aria-label="Clock options" className="ml-[14px]"><Caret className="text-[#1a1a1a]" size={8} /></button>
        <i className="ml-auto h-[43px] w-px bg-[#b4b8c4]" />
      </div>
      <Grip />
      <div className="flex shrink-0 items-center pr-px pl-[4px]">
        <span className="relative flex">
          <select aria-label="Resolution" className="h-[25px] w-[130px] appearance-none rounded-[3px] border border-[#707070] bg-gradient-to-b from-[#f2f2f2] to-[#d2d2d2] pl-[3px] text-[12px] text-black"><option>As is (15 Minutes)</option></select>
          <Caret className="pointer-events-none absolute top-[11px] right-[4px] text-black" size={8} />
        </span>
        <i className="ml-[3px] h-[30px] w-px bg-[#6e7380]" />
        <div className="ml-[4px] flex h-5 w-[138px] items-center bg-white">
          <input aria-label="Command line" className="w-0 flex-1 bg-transparent outline-none" />
          <button aria-label="Command history" className="h-3 w-[3px] rounded-l-[2px] border border-r-0 border-[#707070]" />
        </div>
        <Chevrons className="mb-7 ml-[3px]" />
      </div>
    </div>
  );
}

export default function App() {
  return (
    <div className="flex h-screen flex-col overflow-hidden bg-[#f0f0f0] font-['Open_Sans','Noto_Sans',sans-serif] text-black">
      <TitleBar />
      <MenuBar />
      <TopTools />
      <main className="flex shrink-0">
        <section className="flex min-w-0 flex-1 flex-col bg-black font-['Liberation_Sans',sans-serif]">
          <PricePane />
          <Splitter />
          <VolumePane />
          <Splitter />
          <WavePane />
          <TimeAxis />
          <div className="flex h-[17px] items-center justify-between border-t border-[#d0d0d0] bg-[#ececec] pl-px text-[#444]">
            <button aria-label="Scroll left"><svg width="4" height="7" viewBox="0 0 4 7" fill="currentColor"><path d="M4 0V7L0 3.5z" /></svg></button>
            <span className="flex items-center gap-[9px] pr-[6px]">
              <button aria-label="Scroll thumb" className="h-[14px] w-[14px] rounded-[2px] border border-[#8f8f8f] bg-gradient-to-b from-[#f6f6f6] to-[#cfcfcf]" />
              <button aria-label="Scroll right"><svg width="4" height="7" viewBox="0 0 4 7" fill="currentColor"><path d="M0 0V7L4 3.5z" /></svg></button>
            </span>
          </div>
        </section>
        <TradePanel />
      </main>
      <SheetTabs />
      <BottomTools />
      <footer className="flex min-h-3 flex-1 items-start overflow-hidden border-t border-[#fafafa] bg-[#f0eceb] text-[12px] leading-4 text-black">
        <span className="mt-[4px] -ml-[4px] flex-1">Ready</span>
        <span className="h-full w-[99px] border-l border-[#d6d2d1]" />
        <span className="h-full w-[99px] border-l border-[#d6d2d1]" />
        <span className="h-full w-[70px] border-l border-[#d6d2d1] pt-[5px] pl-[5px]">18:18:34</span>
        <span className="h-full w-[28px] border-l border-[#d6d2d1] pt-[5px] pl-[7px]"><i className="block h-[14px] w-4 bg-[#3cae74]" /></span>
        <span className="h-full w-[15px] border-l border-[#d6d2d1]" />
      </footer>
    </div>
  );
}
